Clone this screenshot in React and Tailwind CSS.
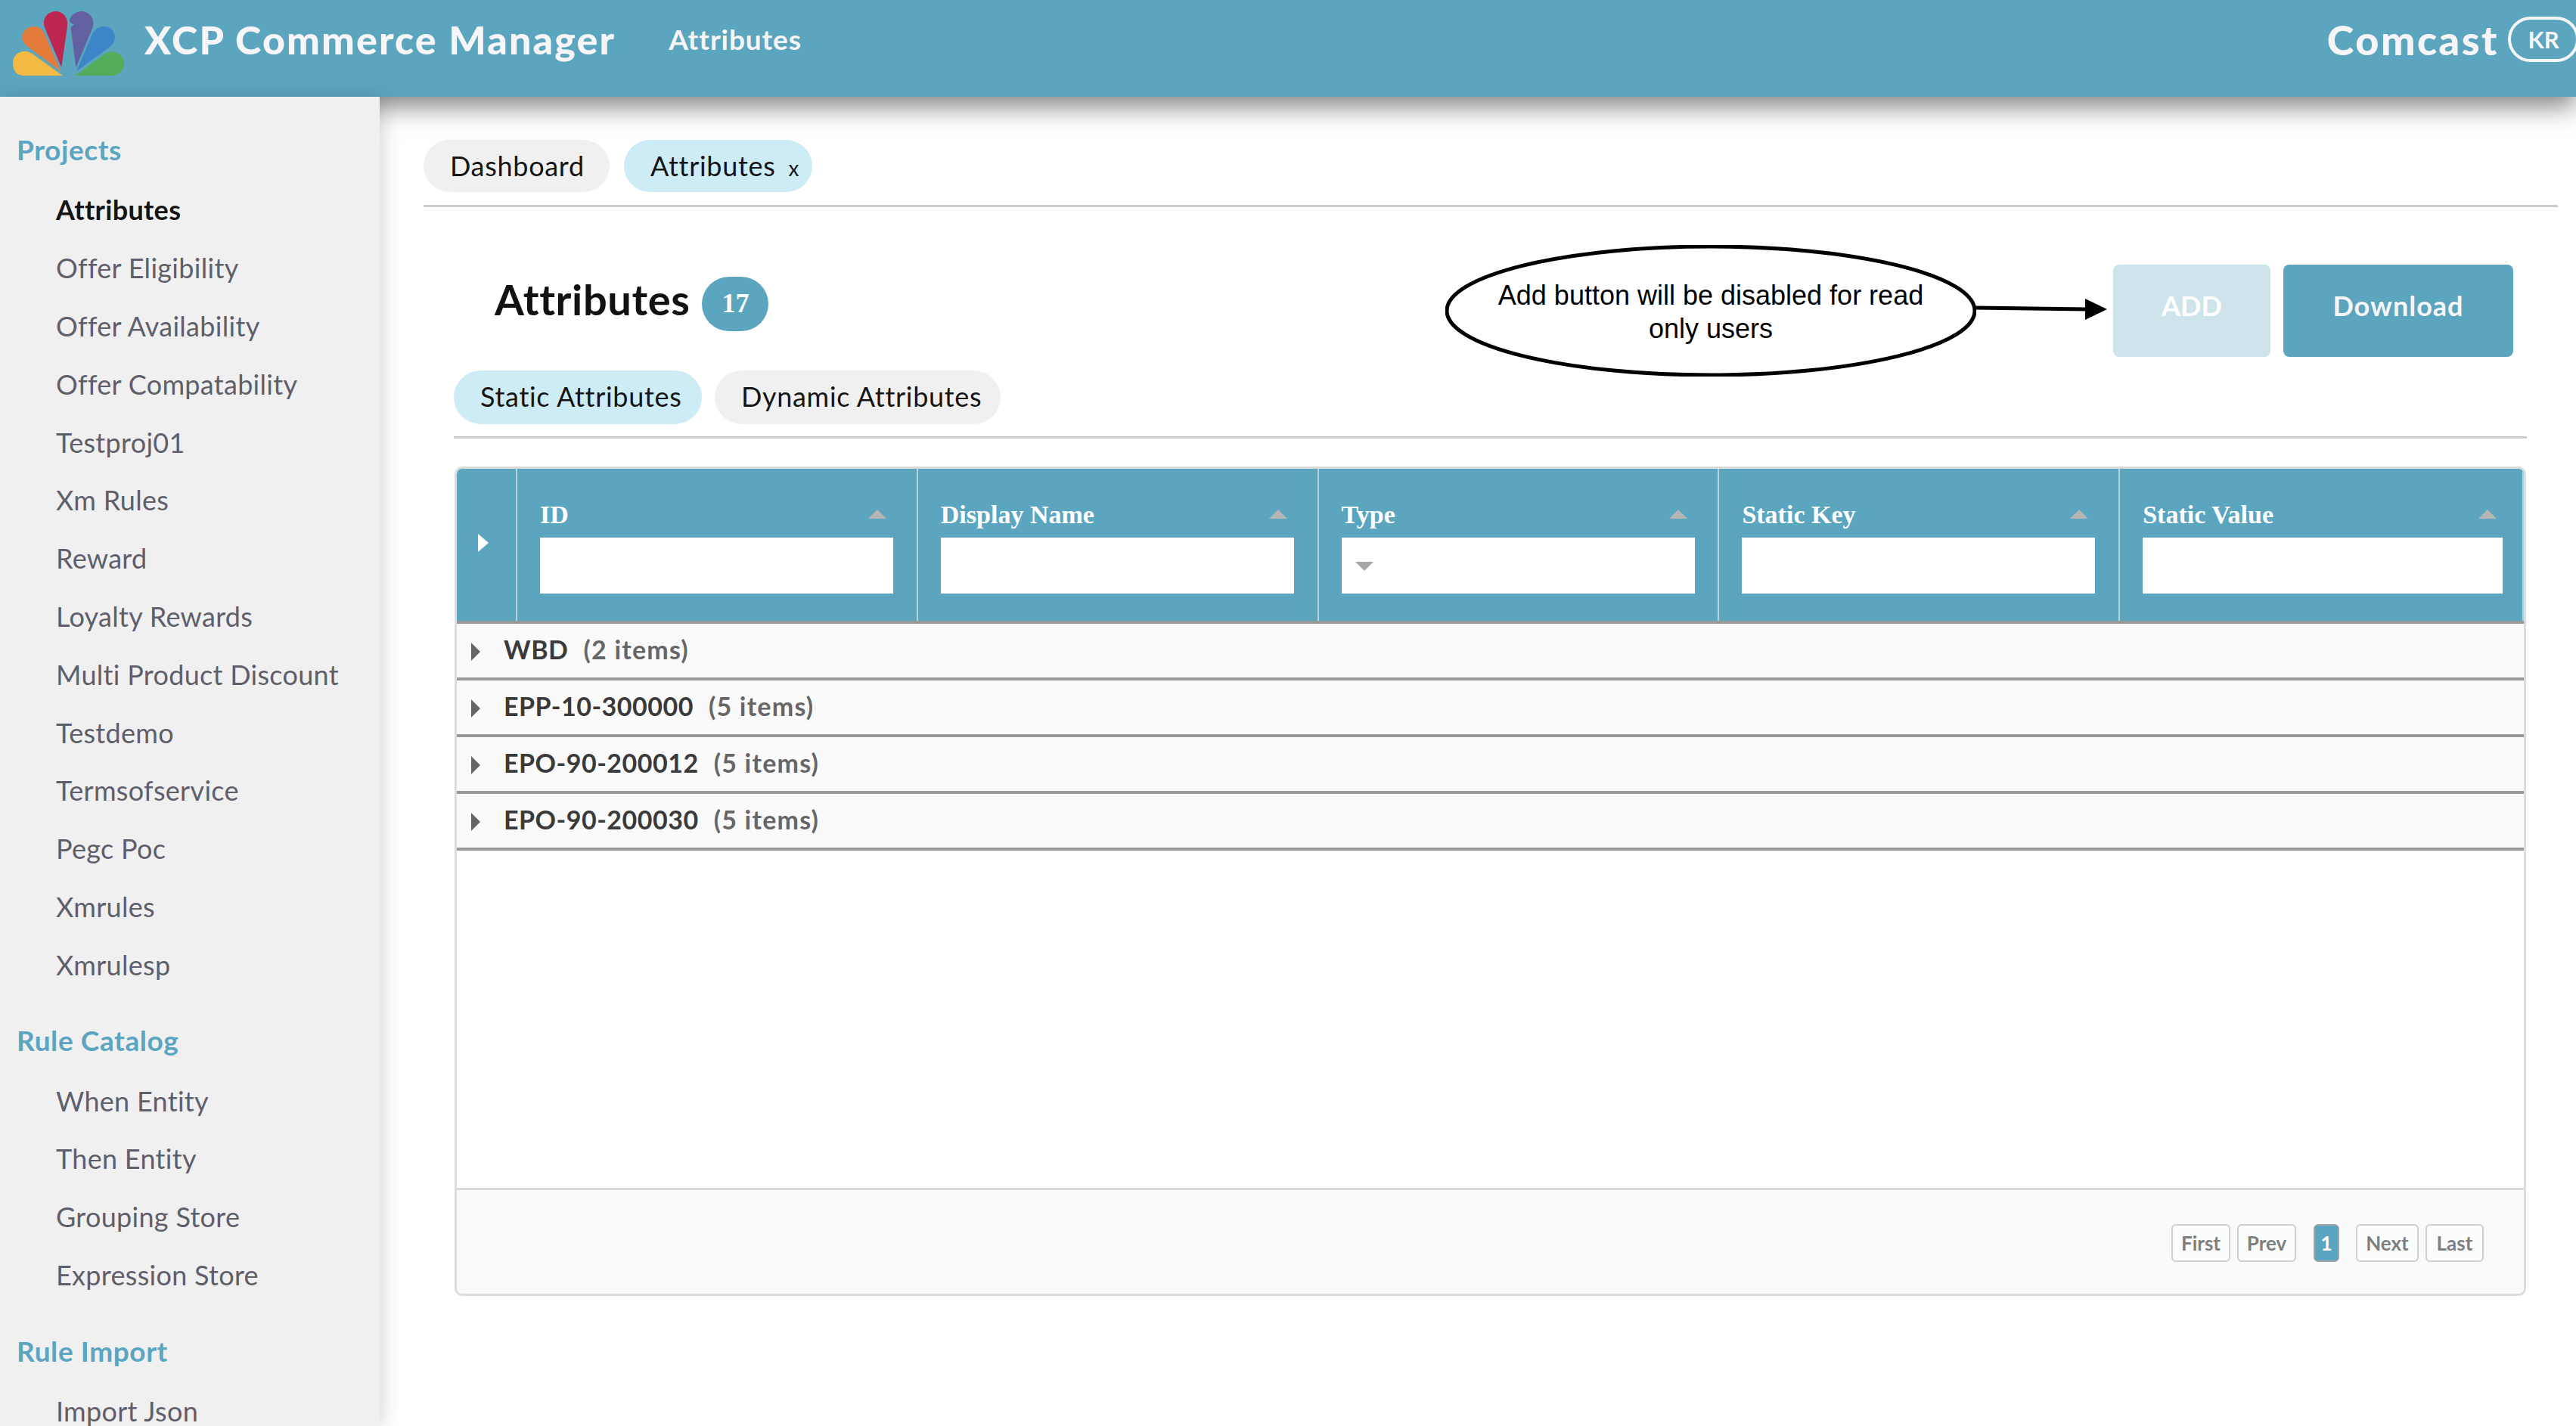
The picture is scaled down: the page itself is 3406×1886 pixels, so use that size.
const FONT = "font-['Lato',sans-serif]";

function Logo() {
  return (
    <svg viewBox="50 45 442 255" className="w-[147px] h-[85px] shrink-0">
      <path fill="#F4B942" d="M248 300 L90 300 C65 300 50 280 50 250 C50 222 72 203 97 203 C108 203 118 207 128 214 Z" />
      <path fill="#E47B3A" d="M240 283 L110 186 C95 175 87 160 87 148 C87 122 110 105 133 105 C152 105 167 115 175 133 Z" />
      <path fill="#BC2650" d="M243 268 L180 118 C176 108 173 100 173 90 C173 65 195 45 220 45 C247 45 267 67 267 95 C267 102 266 108 265 115 Z" />
      <path fill="#63609F" d="M301 268 L281 118 L280 108 L294 97 C282 95 276 88 276 80 C280 60 300 45 322 45 C350 45 370 68 370 92 C370 102 367 110 363 120 Z" />
      <path fill="#3C86C8" d="M303 283 L368 130 C378 115 395 105 413 105 C438 105 456 125 456 148 C456 160 450 173 437 185 Z" />
      <path fill="#53AE5C" d="M297 300 L412 217 C424 208 434 205 445 205 C470 205 492 225 492 252 C492 280 470 300 445 300 Z" />
    </svg>
  );
}

function Section({ title, items, active }) {
  return (
    <div className="mb-[21px]">
      <div className="h-[82px] pl-[22px] flex items-center text-[37px] tracking-[0.6px] font-bold text-[#5ba5c0]">{title}</div>
      {items.map((t) => (
        <div key={t} className={`h-[76.8px] pl-[74px] flex items-center text-[36px] tracking-[0.3px] ${t === active ? "text-[#151515] font-bold" : "text-[#5f5f6b]"}`}>
          {t}
        </div>
      ))}
    </div>
  );
}

function HeadCol({ label, wide, type }) {
  return (
    <div className={`relative border-r-2 border-[#b4d3df] pl-[30px] pt-[35px] ${wide ? "w-[534px] border-r-0" : "w-[530px]"}`}>
      <div className={`flex items-center justify-between h-[50px] ${wide ? "pr-[34px]" : "pr-[40px]"}`}>
        <span className="font-['Liberation_Serif',serif] font-bold text-[34px] text-white">{label}</span>
        <svg viewBox="0 0 24 12" className="w-[24px] h-[12px]"><path d="M12 0 L24 12 L0 12 Z" fill="#b5b5b5" /></svg>
      </div>
      <div className={`relative mt-[6px] h-[74px] bg-white ${wide ? "w-[476px]" : "w-[467px]"}`}>
        {type && (
          <svg viewBox="0 0 24 12" className="absolute left-[18px] top-[32px] w-[24px] h-[12px]"><path d="M0 0 L24 0 L12 12 Z" fill="#a8a8a8" /></svg>
        )}
      </div>
    </div>
  );
}

function Row({ name, count }) {
  return (
    <div className="h-[75px] bg-[#fafafa] border-b-[4px] border-[#999999] flex items-center pl-[19px] pb-[4px]">
      <svg viewBox="0 0 12 24" className="w-[12px] h-[24px] mt-[6px] shrink-0"><path d="M0 0 L12 12 L0 24 Z" fill="#666666" /></svg>
      <span className="ml-[31px] text-[34px] tracking-[0.5px] font-bold text-[#3a3a3a]">{name}</span>
      <span className="ml-[20px] text-[34px] tracking-[1.2px] font-bold text-[#666666]">{count}</span>
    </div>
  );
}

function PageBtn({ label, w, current }) {
  return (
    <div className={`h-[50px] flex items-center justify-center rounded-[6px] border-2 text-[26px] font-bold ${w} ${current ? "bg-[#5ba5c0] border-[#a3a3a3] text-white" : "border-[#cfcfcf] text-[#7f7f7f] bg-[#fbfcfc]"}`}>
      {label}
    </div>
  );
}

export default function App() {
  return (
    <div className={`relative w-[3406px] h-[1886px] overflow-hidden bg-white flex flex-col ${FONT}`}>
      <header className="relative h-[128px] shrink-0 bg-[#5ca5bf] shadow-[0_12px_32px_rgba(0,0,0,0.5)] flex items-start pl-[17px] pt-[15px] overflow-visible">
        <Logo />
        <div className="ml-[27px] mt-[-15px] h-[104px] flex items-center text-[52px] tracking-[2.1px] font-black text-[#f6f6f8]">XCP Commerce Manager</div>
        <div className="ml-[70px] mt-[-15px] h-[104px] flex items-center text-[37px] tracking-[0.9px] font-bold text-[#f6f6f8]">Attributes</div>
        <div className="ml-auto mt-[-15px] h-[104px] flex items-center text-[54px] tracking-[2.5px] font-black text-[#f6f6f8] mr-[-4px]">
          Comcast
          <div className="ml-[12px] w-[94px] h-[60px] rounded-[30px] border-4 border-[#f6f6f8] flex items-center justify-center text-[31px] tracking-normal font-bold">KR</div>
        </div>
      </header>
      <div className="flex flex-1 min-h-0">
        <aside className="relative z-10 w-[502px] shrink-0 overflow-hidden bg-[#f0f0f0] shadow-[4px_0_24px_rgba(0,0,0,0.16)] pt-[29px]">
          <Section title="Projects" active="Attributes" items={["Attributes","Offer Eligibility","Offer Availability","Offer Compatability","Testproj01","Xm Rules","Reward","Loyalty Rewards","Multi Product Discount","Testdemo","Termsofservice","Pegc Poc","Xmrules","Xmrulesp"]} />
          <Section title="Rule Catalog" items={["When Entity","Then Entity","Grouping Store","Expression Store"]} />
          <Section title="Rule Import" items={["Import Json"]} />
        </aside>
        <main className="flex-1 min-w-0 pl-[58px] pt-[57px]">
          <div className="w-[2822px] h-[89px] border-b-[3px] border-[#cccccc] flex items-start gap-[19px]">
            <div className="h-[69px] w-[246px] rounded-full bg-[#f0f0f0] flex items-center pl-[35px] pb-[2px] text-[36px] tracking-[0.7px] text-[#151515]">Dashboard</div>
            <div className="h-[69px] w-[249px] rounded-full bg-[#cdecf6] flex items-center pl-[35px] pb-[2px] text-[36px] tracking-[0.7px] text-[#151515]">
              Attributes<span className="ml-[17px] mt-[6px] text-[28px]">x</span>
            </div>
          </div>
          <div className="pl-[40px]">
            <div className="relative mt-[76px] h-[122px] w-[2723px] flex items-start">
              <div className="flex items-center h-[72px] mt-[16px] ml-[54px]">
                <span className="mb-[12px] text-[56px] tracking-[0.6px] font-bold text-[#111111]">Attributes</span>
                <span className="ml-[16px] w-[88px] h-[72px] rounded-full bg-[#5ca5bf] flex items-center justify-center pb-[2px] font-['Liberation_Serif',serif] font-bold text-[36px] text-white">17</span>
              </div>
              <div className="ml-auto flex gap-[17px]">
                <div className="w-[208px] h-[122px] rounded-[8px] bg-[#cde4ed] flex items-center justify-center pb-[14px] text-[36px] font-bold text-white">ADD</div>
                <div className="w-[304px] h-[122px] rounded-[8px] bg-[#5ca5bf] flex items-center justify-center pb-[14px] text-[36px] tracking-[1px] font-bold text-[#f6f6f8]">Download</div>
              </div>
              <div className="absolute left-[1311px] top-[-26px] w-[702px] h-[174px] flex flex-col items-center justify-center pt-[4px] font-['Liberation_Sans',sans-serif] text-[36px] leading-[44px] text-black">
                <svg viewBox="0 0 702 174" className="absolute inset-0 w-full h-full"><ellipse cx="351" cy="87" rx="349" ry="85" fill="#ffffff" stroke="#000000" strokeWidth="5" /></svg>
                <span className="relative">Add button will be disabled for read</span>
                <span className="relative">only users</span>
              </div>
              <svg viewBox="0 0 180 34" className="absolute left-[2011px] top-[42px] w-[180px] h-[34px]">
                <path d="M0 15 L148 17" stroke="#000000" strokeWidth="5" fill="none" />
                <path d="M146 3 L175 17 L146 31 Z" fill="#000000" />
              </svg>
            </div>
            <div className="mt-[18px] w-[2741px] h-[90px] border-b-[3px] border-[#cccccc] flex items-start gap-[17px]">
              <div className="h-[71px] w-[328px] rounded-full bg-[#cdecf6] flex items-center pl-[35px] pb-[4px] text-[36px] tracking-[0.7px] text-[#151515]">Static Attributes</div>
              <div className="h-[71px] w-[378px] rounded-full bg-[#f0f0f0] flex items-center pl-[35px] pb-[4px] text-[36px] tracking-[0.7px] text-[#151515]">Dynamic Attributes</div>
            </div>
            <div className="mt-[37px] ml-[1px] w-[2739px] h-[1097px] rounded-[10px] border-[3px] border-[#dcdcdc] overflow-hidden flex flex-col">
              <div className="h-[201px] shrink-0 bg-[#5ca5bf] flex">
                <div className="w-[80px] shrink-0 border-r-2 border-[#b4d3df] flex items-center pl-[28px] pb-[6px]">
                  <svg viewBox="0 0 14 24" className="w-[14px] h-[24px]"><path d="M0 0 L14 12 L0 24 Z" fill="#ffffff" /></svg>
                </div>
                <HeadCol label="ID" />
                <HeadCol label="Display Name" />
                <HeadCol label="Type" type />
                <HeadCol label="Static Key" />
                <HeadCol label="Static Value" wide />
              </div>
              <div className="border-t-[4px] border-[#999999]">
                <Row name="WBD" count="(2 items)" />
                <Row name="EPP-10-300000" count="(5 items)" />
                <Row name="EPO-90-200012" count="(5 items)" />
                <Row name="EPO-90-200030" count="(5 items)" />
              </div>
              <div className="flex-1" />
              <div className="h-[140px] shrink-0 bg-[#f8f9fb] border-t-[3px] border-[#d9dadc] flex items-start justify-end pt-[45px] pr-[53px]">
                <div className="flex">
                  <PageBtn label="First" w="w-[78px]" />
                  <div className="w-[9px]" />
                  <PageBtn label="Prev" w="w-[78px]" />
                  <div className="w-[23px]" />
                  <PageBtn label="1" w="w-[34px]" current />
                  <div className="w-[22px]" />
                  <PageBtn label="Next" w="w-[83px]" />
                  <div className="w-[9px]" />
                  <PageBtn label="Last" w="w-[77px]" />
                </div>
              </div>
            </div>
          </div>
        </main>
      </div>
    </div>
  );
}
